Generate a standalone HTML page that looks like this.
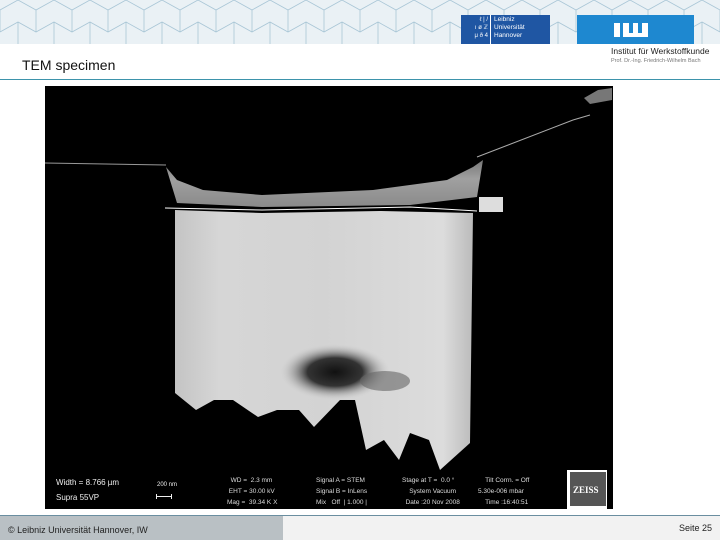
<!DOCTYPE html><html><head><meta charset="utf-8"><style>
body{margin:0;width:720px;height:540px;position:relative;overflow:hidden;background:#fff;font-family:"Liberation Sans",sans-serif}
.a{position:absolute}
</style></head><body>
<svg class="a" style="left:0;top:0" width="720" height="44">
<rect width="720" height="44" fill="#eaf1f5"/>
<g stroke="#a9c6d6" stroke-width="0.8" fill="none">
<path d="M0 10 L18 0 L36 10 L54 0 L72 10 L90 0 L108 10 L126 0 L144 10 L162 0 L180 10 L198 0 L216 10 L234 0 L252 10 L270 0 L288 10 L306 0 L324 10 L342 0 L360 10 L378 0 L396 10 L414 0 L432 10 L450 0 L468 10 L486 0 L504 10 L522 0 L540 10 L558 0 L576 10 L594 0 L612 10 L630 0 L648 10 L666 0 L684 10 L702 0 L720 10"/>
<path d="M0 32 L18 22 L36 32 L54 22 L72 32 L90 22 L108 32 L126 22 L144 32 L162 22 L180 32 L198 22 L216 32 L234 22 L252 32 L270 22 L288 32 L306 22 L324 32 L342 22 L360 32 L378 22 L396 32 L414 22 L432 32 L450 22 L468 32 L486 22 L504 32 L522 22 L540 32 L558 22 L576 32 L594 22 L612 32 L630 22 L648 32 L666 22 L684 32 L702 22 L720 32"/>
<path d="M0 10V32M36 10V32M72 10V32M108 10V32M144 10V32M180 10V32M216 10V32M252 10V32M288 10V32M324 10V32M360 10V32M396 10V32M432 10V32M468 10V32M504 10V32M540 10V32M576 10V32M612 10V32M648 10V32M684 10V32M720 10V32"/>
<path d="M18 22V44M54 22V44M90 22V44M126 22V44M162 22V44M198 22V44M234 22V44M270 22V44M306 22V44M342 22V44M378 22V44M414 22V44M450 22V44M486 22V44M522 22V44M558 22V44M594 22V44M630 22V44M666 22V44M702 22V44"/>
</g></svg>
<div class="a" style="left:461px;top:15px;width:89px;height:29px;background:#1f56a3"></div>
<div class="a" style="left:490px;top:15px;width:1px;height:29px;background:#fff"></div>
<div class="a" style="left:464px;top:16px;font-size:6px;line-height:8px;color:#fff;width:24px;text-align:right">ℓ | /<br>ı ø ℤ<br>μ ð 4</div>
<div class="a" style="left:494px;top:16px;font-size:6.5px;line-height:8px;color:#fff">Leibniz<br>Universität<br>Hannover</div>
<div class="a" style="left:577px;top:15px;width:117px;height:29px;background:#1e88d0"></div>
<svg class="a" style="left:612px;top:19px" width="40" height="20"><path d="M2 4h6v14H2zM11 4h6v10h4V4h5v10h4V4h6v14H11z" fill="#fff"/></svg>
<div class="a" style="left:611px;top:46px;font-size:8.5px;color:#222">Institut für Werkstoffkunde</div>
<div class="a" style="left:611px;top:58px;font-size:5.5px;color:#777">Prof. Dr.-Ing. Friedrich-Wilhelm Bach</div>
<div class="a" style="left:22px;top:57px;font-size:14px;color:#111">TEM specimen</div>
<div class="a" style="left:0;top:79px;width:720px;height:1px;background:#3d93ab"></div>
<svg class="a" style="left:45px;top:86px" width="568" height="423" viewBox="45 86 568 423">
<defs><radialGradient id="g" cx="0.5" cy="0.5" r="0.5"><stop offset="0" stop-color="#111"/><stop offset="0.5" stop-color="#333"/><stop offset="1" stop-color="#c8c8c8" stop-opacity="0"/></radialGradient>
<linearGradient id="s" x1="0" x2="1"><stop offset="0" stop-color="#c4c4c4"/><stop offset="0.15" stop-color="#d6d6d6"/><stop offset="0.5" stop-color="#d3d3d3"/><stop offset="0.9" stop-color="#dcdcdc"/><stop offset="1" stop-color="#bbb"/></linearGradient>
<linearGradient id="b" x1="0" y1="0" x2="0" y2="1"><stop offset="0" stop-color="#777"/><stop offset="0.4" stop-color="#a0a0a0"/><stop offset="1" stop-color="#8a8a8a"/></linearGradient></defs>
<rect x="45" y="86" width="568" height="423" fill="#000"/>
<path d="M45 163L166 165" stroke="#999" stroke-width="1"/>
<path d="M477 157L573 120L590 115" stroke="#aaa" stroke-width="1" fill="none"/>
<path d="M584 98L598 90L612 88L612 100L590 104Z" fill="#777"/>
<path d="M166 167L177 180L203 190L262 195L373 190L447 180L473 167L483 160L477 197L410 205L262 207L177 203Z" fill="url(#b)"/>
<path d="M479 197L503 197L503 212L479 212Z" fill="#ddd"/>
<path d="M165 208L262 210L410 207L477 211" stroke="#fff" stroke-width="1" fill="none"/>
<path d="M175 210L262 213L380 211L473 213L470 443L440 470L429 440L410 433L399 460L384 440L366 450L355 400L340 400L314 427L299 410L277 410L258 417L233 400L214 400L196 410L175 393Z" fill="url(#s)"/>
<ellipse cx="335" cy="372" rx="55" ry="28" fill="url(#g)"/>
<ellipse cx="385" cy="381" rx="25" ry="10" fill="#666" opacity="0.6"/>
<rect x="567" y="470" width="40" height="39" fill="#fff"/>
<rect x="570" y="472" width="36" height="34" fill="#555"/>
<text x="573" y="493" font-family="Liberation Serif" font-weight="bold" font-size="9" fill="#fff">ZEISS</text>
</svg>
<div class="a" style="left:56px;top:478px;font-size:8px;color:#eee">Width = 8.766 µm</div>
<div class="a" style="left:56px;top:493px;font-size:8px;color:#eee">Supra 55VP</div>
<div class="a" style="left:157px;top:482px;font-size:6px;color:#eee">200 nm</div>
<div class="a" style="left:156px;top:494px;width:14px;height:5px;border:1px solid #eee;border-top:none;border-bottom:none"></div>
<div class="a" style="left:156px;top:496px;width:15px;height:1px;background:#eee"></div>
<div class="a" style="left:227px;top:475px;font-size:6.5px;line-height:11px;color:#ddd;white-space:pre">  WD =  2.3 mm
 EHT = 30.00 kV
Mag =  39.34 K X</div>
<div class="a" style="left:316px;top:475px;font-size:6.5px;line-height:11px;color:#ddd;white-space:pre">Signal A = STEM
Signal B = InLens
Mix   Off  | 1.000 |</div>
<div class="a" style="left:402px;top:475px;font-size:6.5px;line-height:11px;color:#ddd;white-space:pre">Stage at T =  0.0 °
    System Vacuum
  Date :20 Nov 2008</div>
<div class="a" style="left:478px;top:475px;font-size:6.5px;line-height:11px;color:#ddd;white-space:pre">    Tilt Corrn. = Off
5.30e-006 mbar
    Time :16:40:51</div>
<div class="a" style="left:0;top:515px;width:720px;height:1px;background:#6a8ea0"></div>
<div class="a" style="left:0;top:516px;width:283px;height:24px;background:#b9c0c4"></div>
<div class="a" style="left:283px;top:516px;width:437px;height:24px;background:#f2f2f2"></div>
<div class="a" style="left:8px;top:525px;font-size:9px;color:#222">© Leibniz Universität Hannover, IW</div>
<div class="a" style="right:8px;top:523px;font-size:9px;color:#222">Seite 25</div>
</body></html>
